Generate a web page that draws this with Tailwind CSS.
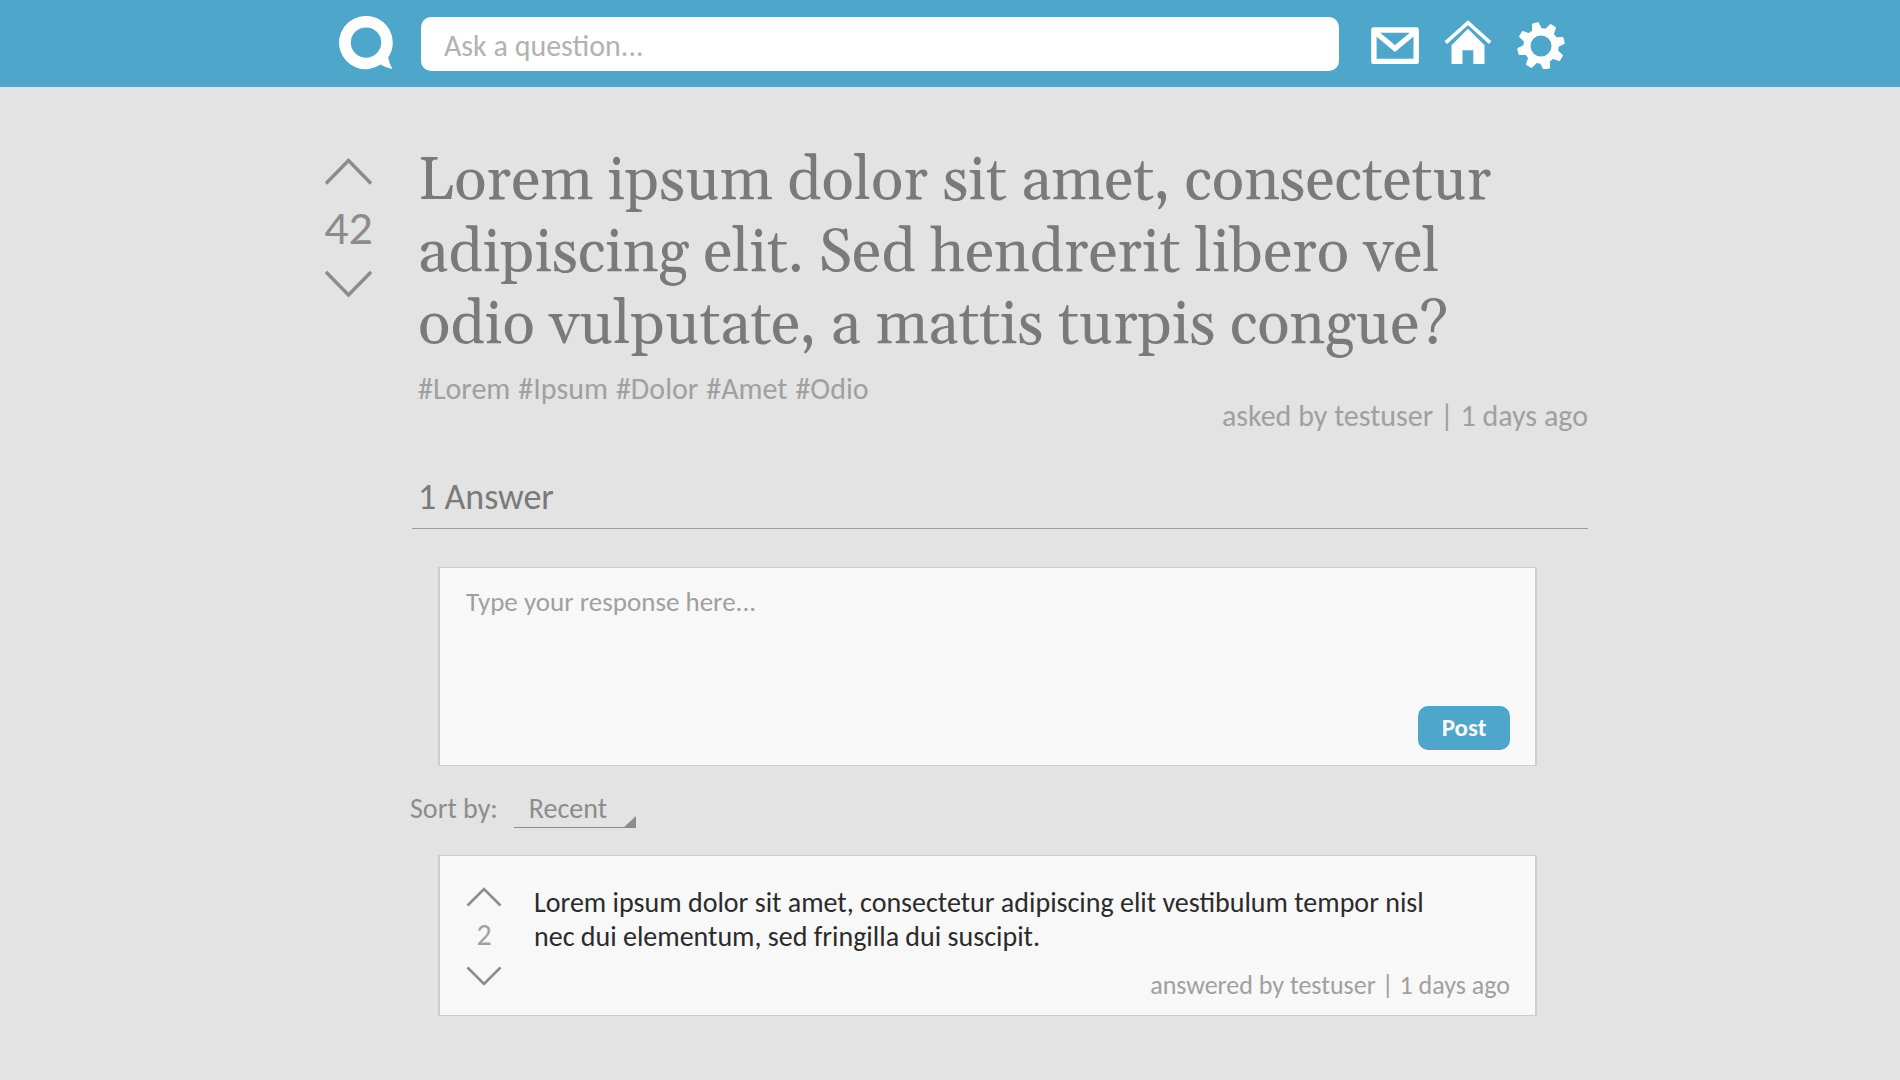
<!DOCTYPE html>
<html lang="en">
<head>
<meta charset="utf-8">
<meta name="viewport" content="width=device-width, initial-scale=1">
<title>Question</title>
<script src="https://cdn.jsdelivr.net/npm/@tailwindcss/browser@4"></script>
</head>
<body class="min-h-screen bg-[#e3e3e3] font-['Carlito','Lato',sans-serif] text-[#8c8c8c]">
<header class="bg-[#4ea7cb]">
  <div class="mx-auto flex h-[87px] max-w-[1276px] items-center pr-[23px] pl-[27px]">
    <a href="#" aria-label="Home page" class="shrink-0">
      <svg class="block h-14 w-14" viewBox="0 0 56 56" fill="#fff"><path fill-rule="evenodd" d="M27 0a26.600 26.600 0 0 1 22.200 41.500c.8 4 2.200 7.700 4.300 11.500-4.200-.8-8.300-2.300-11.900-4.400A26.600 26.600 0 1 1 27 0zm0 11.400a15.200 15.200 0 1 0 0 30.400 15.200 15.200 0 0 0 0-30.400z"/></svg>
    </a>
    <form class="ml-[26px] flex flex-1">
      <input type="text" aria-label="Ask a question" placeholder="Ask a question..." class="h-[54px] w-full rounded-[10px] bg-white px-[23px] pt-[3px] text-[30px] text-[#8c8c8c] outline-none placeholder:text-[#b2b2b2]">
    </form>
    <nav class="ml-8 flex items-center gap-[25px]">
      <a href="#" aria-label="Messages"><svg class="block h-[50px] w-12" viewBox="0 0 48 50"><path fill="none" stroke="#fff" stroke-width="5.400" stroke-linejoin="round" d="M2.900 11h42.300v31.400H2.900z"/><path fill="none" stroke="#fff" stroke-width="5.400" d="M3.500 12.500 24 29.500 44.500 12.500"/></svg></a>
      <a href="#" aria-label="Home"><svg class="block h-[50px] w-12" viewBox="0 0 48 50" fill="#fff"><path d="M7.500 26.200 24 9.800l16.500 16.400V45H29.300V31.200H18.500V45H7.500z"/><path fill="none" stroke="#fff" stroke-width="3.600" d="M1.800 23.600 24 3.600l22.200 20"/></svg></a>
      <a href="#" aria-label="Settings"><svg class="block h-[50px] w-12" viewBox="0 0 48 50"><g transform="translate(24 27)"><circle r="14.100" fill="none" stroke="#fff" stroke-width="7.200"/><g fill="#fff" stroke="#fff" stroke-width="2" stroke-linejoin="round"><path id="tooth" transform="rotate(-14)" d="M-4.200-15.500-2.600-22.800h5.200L4.200-15.500z"/><use href="#tooth" transform="rotate(45)"/><use href="#tooth" transform="rotate(90)"/><use href="#tooth" transform="rotate(135)"/><use href="#tooth" transform="rotate(180)"/><use href="#tooth" transform="rotate(225)"/><use href="#tooth" transform="rotate(270)"/><use href="#tooth" transform="rotate(315)"/></g></g></svg></a>
    </nav>
  </div>
</header>

<main class="mx-auto flex max-w-[1276px] items-start gap-10 pb-16 pl-[13px]">
  <div class="flex w-[47px] shrink-0 flex-col items-center pt-[71px]">
    <button type="button" aria-label="Vote question up"><svg class="block h-7 w-[47px]" viewBox="0 0 47 28" fill="none" stroke="#8c8c8c" stroke-width="3.400"><path d="M1 25.500 23.500 2.500 46 25.500"/></svg></button>
    <output class="my-4 text-[48px] leading-[52px]">42</output>
    <button type="button" aria-label="Vote question down"><svg class="block h-7 w-[47px]" viewBox="0 0 47 28" fill="none" stroke="#8c8c8c" stroke-width="3.400"><path d="M1 2 23.500 25 46 2"/></svg></button>
  </div>

  <div class="min-w-0 flex-1">
    <section class="pt-[59px] pl-[6px]">
      <h1 class="max-w-[1100px] font-['Gelasio','Liberation_Serif',serif] text-[60px] leading-[72px] text-[#7a7a7a]">Lorem ipsum dolor sit amet, consectetur adipiscing elit. Sed hendrerit libero vel odio vulputate, a mattis turpis congue?</h1>
      <p class="mt-[9px] flex flex-wrap gap-x-2 text-[30px] leading-9 text-[#a0a0a0]"><a href="#">#Lorem</a><a href="#">#Ipsum</a><a href="#">#Dolor</a><a href="#">#Amet</a><a href="#">#Odio</a></p>
      <p class="-mt-[9px] text-right text-[30px] leading-9 text-[#a0a0a0]">asked by testuser | 1 days ago</p>
    </section>

    <h2 class="mt-[41px] border-b border-[#9c9c9c] pb-[9px] pl-[6px] text-[36px] leading-[44px] text-[#7a7a7a]">1 Answer</h2>

    <form class="mt-[38px] mr-[51px] ml-[26px] flex h-[199px] flex-col items-end border-x-2 border-y border-[#cdcdcd] bg-[#f8f8f8] pr-[25px] pb-[15px] pl-[26px]">
      <textarea aria-label="Your response" placeholder="Type your response here..." class="w-full flex-1 resize-none bg-transparent pt-[18px] text-[27px] leading-8 outline-none placeholder:text-[#a0a0a0]"></textarea>
      <button type="button" class="h-11 w-[92px] rounded-[10px] bg-[#4ea7cb] text-[25px] font-bold text-[#f8f8f8]">Post</button>
    </form>

    <div class="-ml-[2px] flex items-end pt-[25px] text-[28px] leading-9">
      <label for="sort" class="pb-[1px]">Sort by:</label>
      <div class="relative ml-4">
        <select id="sort" class="block w-[122px] appearance-none border-b border-[#8c8c8c] bg-transparent pl-[15px] outline-none"><option>Recent</option><option>Top</option></select>
        <svg class="pointer-events-none absolute right-0 bottom-0 h-3 w-[13px]" viewBox="0 0 13 12" fill="#8c8c8c"><path d="M13 0v12H0z"/></svg>
      </div>
    </div>

    <article class="mt-[27px] mr-[51px] ml-[26px] flex border-x-2 border-y border-[#cdcdcd] bg-[#f8f8f8] pr-[25px] pb-[14px] pl-[26px]">
      <div class="flex w-9 shrink-0 flex-col items-center pt-[31px]">
        <button type="button" aria-label="Vote answer up"><svg class="block h-5 w-9" viewBox="0 0 36 20" fill="none" stroke="#8c8c8c" stroke-width="2.600"><path d="M1.500 18.500 18 2 34.500 18.500"/></svg></button>
        <output class="mt-[10px] mb-[13px] text-[30px] leading-9 text-[#a0a0a0]">2</output>
        <button type="button" aria-label="Vote answer down"><svg class="block h-5 w-9" viewBox="0 0 36 20" fill="none" stroke="#8c8c8c" stroke-width="2.600"><path d="M1.500 1.500 18 18 34.500 1.500"/></svg></button>
      </div>
      <div class="ml-8 flex flex-1 flex-col pt-[30px]">
        <p class="max-w-[920px] text-[28px] leading-[34px] text-[#2b2b2b]">Lorem ipsum dolor sit amet, consectetur adipiscing elit vestibulum tempor nisl nec dui elementum, sed fringilla dui suscipit.</p>
        <p class="mt-auto pt-[15px] text-right text-[26px] leading-8 text-[#a0a0a0]">answered by testuser | 1 days ago</p>
      </div>
    </article>
  </div>
</main>
</body>
</html>
